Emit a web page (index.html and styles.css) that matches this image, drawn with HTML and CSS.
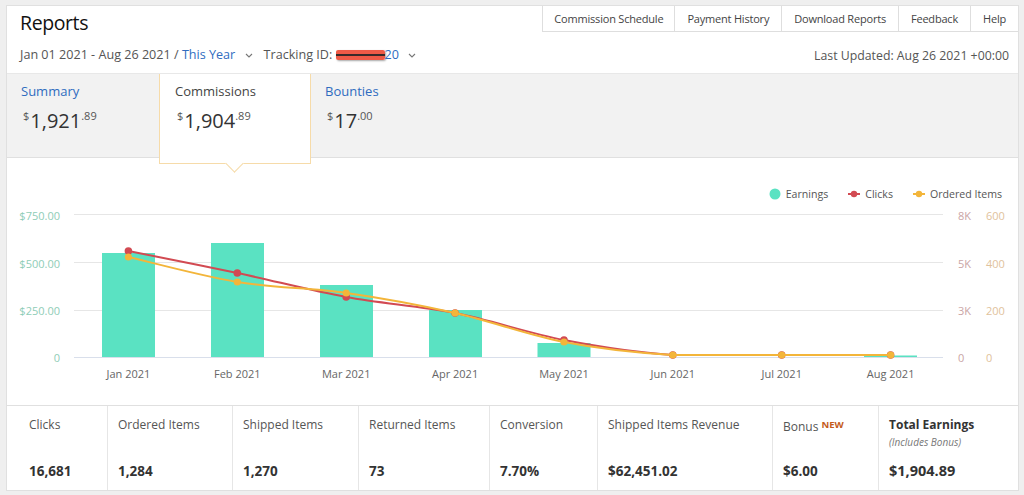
FILE: index.html
```html
<!DOCTYPE html>
<html lang="en">
<head>
<meta charset="utf-8">
<title>Reports</title>
<link rel="stylesheet" href="styles.css">
</head>
<body>
<div class="page">
  <div class="card">
    <header class="head">
      <div class="head-left">
        <h1 class="title">Reports</h1>
        <div class="filters">
          <span class="filter">Jan 01 2021 - Aug 26 2021 / <span class="link">This Year</span>
            <svg class="chev" width="8" height="5" viewBox="0 0 8 5"><path d="M1 1l3 3 3-3" fill="none" stroke="#777" stroke-width="1.1"/></svg></span>
          <span class="filter">Tracking ID: <span class="redact"></span><span class="link">20</span>
            <svg class="chev" width="8" height="5" viewBox="0 0 8 5"><path d="M1 1l3 3 3-3" fill="none" stroke="#777" stroke-width="1.1"/></svg></span>
        </div>
      </div>
      <div class="head-right">
        <nav class="tabs">
          <span class="tab">Commission Schedule</span>
          <span class="tab">Payment History</span>
          <span class="tab">Download Reports</span>
          <span class="tab">Feedback</span>
          <span class="tab">Help</span>
        </nav>
        <div class="updated">Last Updated: Aug 26 2021 +00:00</div>
      </div>
    </header>

    <section class="band">
      <div class="stab">
        <div class="stab-name link">Summary</div>
        <div class="amt"><span class="cur">$</span>1,921<span class="cents">.89</span></div>
      </div>
      <div class="stab active">
        <div class="stab-name">Commissions</div>
        <div class="amt"><span class="cur">$</span>1,904<span class="cents">.89</span></div>
      </div>
      <div class="stab">
        <div class="stab-name link">Bounties</div>
        <div class="amt"><span class="cur">$</span>17<span class="cents">.00</span></div>
      </div>
    </section>

    <section class="chart">
      <div class="legend">
        <span class="lg"><svg width="12" height="12" viewBox="0 0 12 12"><circle cx="6" cy="6" r="5.5" fill="#5ae2c2"/></svg>Earnings</span>
        <span class="lg"><svg width="12" height="8" viewBox="0 0 12 8"><line x1="0" y1="4" x2="12" y2="4" stroke="#d24a52" stroke-width="2"/><circle cx="6" cy="4" r="3.2" fill="#d24a52"/></svg>Clicks</span>
        <span class="lg"><svg width="12" height="8" viewBox="0 0 12 8"><line x1="0" y1="4" x2="12" y2="4" stroke="#f3b53a" stroke-width="2"/><circle cx="6" cy="4" r="3.2" fill="#f3b53a"/></svg>Ordered Items</span>
      </div>
      <svg class="plot" width="1011" height="200" viewBox="7 205 1011 200">
        <g stroke="#e6e6e6" stroke-width="1">
          <line x1="74" y1="214.5" x2="943" y2="214.5"/>
          <line x1="74" y1="262.5" x2="943" y2="262.5"/>
          <line x1="74" y1="310.5" x2="943" y2="310.5"/>
        </g>
        <g font-size="11" fill="#8fcdb7" text-anchor="end" dominant-baseline="central">
          <text x="60" y="215">$750.00</text>
          <text x="60" y="263">$500.00</text>
          <text x="60" y="310">$250.00</text>
          <text x="60" y="357">0</text>
        </g>
        <g font-size="11" fill="#caa5a5" dominant-baseline="central">
          <text x="958" y="215">8K</text>
          <text x="958" y="263">5K</text>
          <text x="958" y="310">3K</text>
          <text x="958" y="357">0</text>
        </g>
        <g font-size="11" fill="#dfc29c" dominant-baseline="central">
          <text x="986" y="215">600</text>
          <text x="986" y="263">400</text>
          <text x="986" y="310">200</text>
          <text x="986" y="357">0</text>
        </g>
        <g fill="#5ae2c2">
          <rect x="102" y="253" width="53" height="104.5"/>
          <rect x="211" y="243" width="53" height="114.5"/>
          <rect x="320" y="285" width="53" height="72.5"/>
          <rect x="429" y="310" width="53" height="47.5"/>
          <rect x="537.5" y="343" width="53" height="14.5"/>
          <rect x="864" y="355.5" width="53" height="2"/>
        </g>
        <line x1="74" y1="357.5" x2="943" y2="357.5" stroke="#d9dfeb" stroke-width="1.2"/>
        <g font-size="11" fill="#666" text-anchor="middle" dominant-baseline="central">
          <text x="128.4" y="373">Jan 2021</text>
          <text x="237.3" y="373">Feb 2021</text>
          <text x="346.2" y="373">Mar 2021</text>
          <text x="455.1" y="373">Apr 2021</text>
          <text x="564" y="373">May 2021</text>
          <text x="672.8" y="373">Jun 2021</text>
          <text x="781.7" y="373">Jul 2021</text>
          <text x="890.6" y="373">Aug 2021</text>
        </g>
        <path d="M128.4,251 C146.55,254.67 201,265.33 237.3,273 C273.6,280.67 309.9,290.33 346.2,297 C382.5,303.67 418.8,305.83 455.1,313 C491.4,320.17 527.7,333 564,340 C600.3,347 636.5,352.5 672.8,355 C709.1,355 745.4,355 781.7,355 C818,355 854.5,355 890.6,355" fill="none" stroke="#d24a52" stroke-width="2"/>
        <g fill="#d24a52">
          <circle cx="128.4" cy="251" r="3.8"/>
          <circle cx="237.3" cy="273" r="3.8"/>
          <circle cx="346.2" cy="297" r="3.8"/>
          <circle cx="455.1" cy="313" r="3.8"/>
          <circle cx="564" cy="340" r="3.8"/>
          <circle cx="672.8" cy="355" r="3.8"/>
          <circle cx="781.7" cy="355" r="3.8"/>
          <circle cx="890.6" cy="355" r="3.8"/>
        </g>
        <path d="M128.4,257 C146.55,261.17 201,276 237.3,282 C273.6,288 309.9,287.83 346.2,293 C382.5,298.17 418.8,304.83 455.1,313 C491.4,321.17 527.7,335 564,342 C600.3,349 636.5,352.83 672.8,355 C709.1,355 745.4,355 781.7,355 C818,355 854.5,355 890.6,355" fill="none" stroke="#f3b53a" stroke-width="2"/>
        <g fill="#f3b53a">
          <circle cx="128.4" cy="257" r="3.6"/>
          <circle cx="237.3" cy="282" r="3.6"/>
          <circle cx="346.2" cy="293" r="3.6"/>
          <circle cx="455.1" cy="313" r="3.6"/>
          <circle cx="564" cy="342" r="3.6"/>
          <circle cx="672.8" cy="355" r="3.6"/>
          <circle cx="781.7" cy="355" r="3.6"/>
          <circle cx="890.6" cy="355" r="3.6"/>
        </g>
      </svg>
    </section>

    <section class="stats">
      <div class="stat first"><div class="label">Clicks</div><div class="value">16,681</div></div>
      <div class="stat"><div class="label">Ordered Items</div><div class="value">1,284</div></div>
      <div class="stat"><div class="label">Shipped Items</div><div class="value">1,270</div></div>
      <div class="stat"><div class="label">Returned Items</div><div class="value">73</div></div>
      <div class="stat"><div class="label">Conversion</div><div class="value">7.70%</div></div>
      <div class="stat"><div class="label">Shipped Items Revenue</div><div class="value">$62,451.02</div></div>
      <div class="stat"><div class="label">Bonus <span class="new">NEW</span></div><div class="value">$6.00</div></div>
      <div class="stat total"><div class="label"><b>Total Earnings</b><i class="note">(Includes Bonus)</i></div><div class="value big">$1,904.89</div></div>
    </section>
  </div>
</div>
</body>
</html>
```

FILE: styles.css
```css
* { box-sizing: border-box; margin: 0; padding: 0; }

body {
  background: #efefef;
  font-family: "Open Sans", "Liberation Sans", sans-serif;
  color: #333;
}

.page { padding: 5px 5px 4px 6px; }

.card {
  background: #fff;
  border: 1px solid #e0e0e0;
  height: 486px;
  display: flex;
  flex-direction: column;
}

.link { color: #2f6cbf; }

/* header */
.head {
  height: 67px;
  display: flex;
  justify-content: space-between;
}
.head-left { padding: 3px 0 0 13px; }
.title {
  font-size: 19.5px;
  font-weight: 400;
  letter-spacing: -0.4px;
  line-height: 28px;
  color: #111;
}
.filters {
  display: flex;
  gap: 11px;
  margin-top: 9px;
  font-size: 12.6px;
  color: #555;
  line-height: 18px;
}
.chev { margin-left: 6px; vertical-align: middle; }
.redact {
  display: inline-block;
  width: 49px;
  height: 10px;
  vertical-align: -1px;
  background: linear-gradient(#ef5a47 0 45%, #3a2a2a 45% 58%, #ef5a47 58%);
  border-radius: 2px;
  box-shadow: 1px 1px 2px rgba(0,0,0,0.35);
}

.head-right {
  display: flex;
  flex-direction: column;
  align-items: flex-end;
}
.tabs {
  display: flex;
  height: 26px;
}
.tab {
  font-size: 11px;
  letter-spacing: -0.2px;
  color: #444;
  padding: 0 12px;
  line-height: 25px;
  border-left: 1px solid #dedede;
  border-bottom: 1px solid #dedede;
}
.tab:first-child { padding-left: 11px; padding-right: 11px; }
.updated {
  margin-top: 15px;
  padding-right: 9px;
  font-size: 12.3px;
  color: #555;
  line-height: 18px;
}

/* summary band */
.band {
  height: 85px;
  background: #f2f2f2;
  border-top: 1px solid #e8e8e8;
  border-bottom: 1px solid #e0e0e0;
  display: flex;
  align-items: flex-start;
}
.stab {
  width: 152px;
  height: 84px;
  padding: 8px 15px 0 14px;
}
.stab-name {
  font-size: 13px;
  line-height: 18px;
}
.stab.active {
  position: relative;
  height: 90px;
  padding-left: 15px;
  background: #fff;
  border: 1px solid #f6dba9;
  border-top: none;
  color: #444;
  z-index: 2;
}
.stab.active::after {
  content: "";
  position: absolute;
  left: 68px;
  bottom: -7px;
  width: 12px;
  height: 12px;
  background: #fff;
  border-right: 1px solid #f6dba9;
  border-bottom: 1px solid #f6dba9;
  transform: rotate(45deg);
}
.amt {
  margin-top: 3px;
  font-size: 20px;
  line-height: 26px;
  color: #333;
  padding-left: 2px;
}
.cur, .cents {
  font-size: 11px;
  vertical-align: 8px;
  color: #555;
}
.cur { margin-right: 1px; }

/* chart */
.chart {
  height: 247px;
  display: flex;
  flex-direction: column;
}
.legend {
  height: 47px;
  padding: 25px 16px 0 0;
  display: flex;
  justify-content: flex-end;
  gap: 20px;
  font-size: 10.6px;
  color: #555;
  line-height: 14px;
}
.lg { display: flex; align-items: center; gap: 5px; }
.plot { display: block; font-family: "Open Sans", "Liberation Sans", sans-serif; }

/* stats */
.stats {
  flex: 1;
  display: grid;
  grid-template-columns: 100px 125px 126px 131px 108px 175px 106px 1fr;
  border-top: 1px solid #e0e0e0;
}
.stat {
  display: flex;
  flex-direction: column;
  justify-content: space-between;
  padding: 10px 10px 10px 10px;
  border-left: 1px solid #e6e6e6;
}
.stat.first { border-left: none; padding-left: 22px; }
.label {
  font-size: 12px;
  color: #555;
  line-height: 18px;
}
.label b { display: block; color: #333; font-weight: 700; }
.note {
  display: block;
  font-size: 10px;
  color: #777;
  line-height: 16px;
}
.new {
  font-size: 9.5px;
  font-weight: 700;
  color: #c45b1b;
  vertical-align: 3px;
}
.value {
  font-size: 13.5px;
  font-weight: 700;
  color: #333;
  line-height: 18px;
}
.value.big { font-size: 14.5px; }
```
